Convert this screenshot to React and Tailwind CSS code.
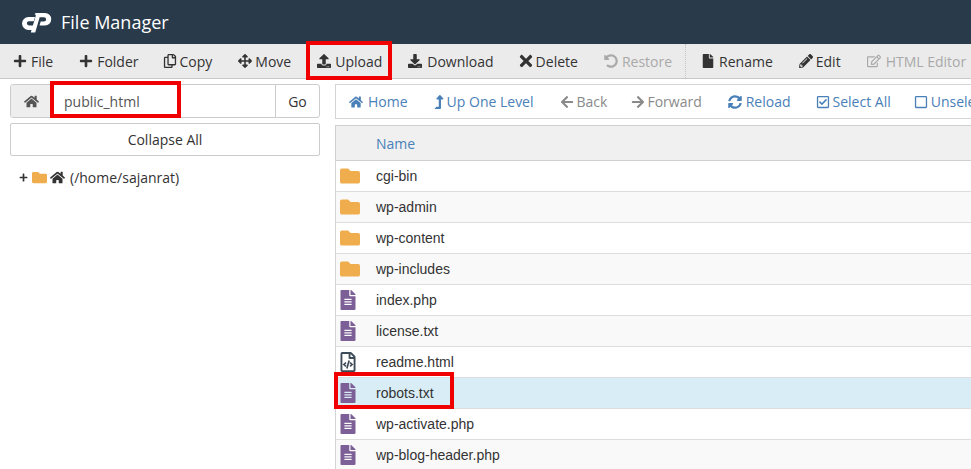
import React from "react";
import { FaPlus, FaRegCopy, FaArrowsAlt, FaUpload, FaDownload, FaTimes, FaUndoAlt, FaFile, FaPencilAlt, FaRegEdit, FaHome, FaLevelUpAlt, FaArrowLeft, FaArrowRight, FaSyncAlt, FaRegCheckSquare, FaRegSquare, FaFolder, FaFileAlt, FaRegFileCode } from "react-icons/fa";

const Tool = ({ icon: I, label, off, box, ic = "text-[14px]" }) => (
  <div className={`flex items-center shrink-0 ${off ? "text-[#a9a9a9]" : "text-[#333]"}`}>
    <div className={`${box} shrink-0 flex items-center`}><I className={`${ic} shrink-0`} /></div>
    <span>{label}</span>
  </div>
);

const Nav = ({ icon: I, label, off, box, cls = "", ic = "text-[14px]" }) => (
  <div className={`flex items-center shrink-0 ${cls} ${off ? "text-[#8a8a8a]" : "text-[#4a80b8]"}`}>
    <div className={`${box} shrink-0 flex items-center`}><I className={`${ic} shrink-0`} /></div>
    <span>{label}</span>
  </div>
);

const files = [
  ["cgi-bin", "d"], ["wp-admin", "d"], ["wp-content", "d"], ["wp-includes", "d"],
  ["index.php", "f"], ["license.txt", "f"], ["readme.html", "c"], ["robots.txt", "f"],
  ["wp-activate.php", "f"], ["wp-blog-header.php", "f"],
];

const Logo = () => (
  <svg width="31" height="21" viewBox="0 0 31 21" fill="#fff">
    <path d="M7.500 5H14l-1.300 4.200H8a2 2 0 0 0 0 4.200h3.300c.8 0 1.100.5.900 1.100L11 18H7.500a6.500 6.500 0 0 1 0-13z" />
    <path d="M14.500 1H24a6 6 0 0 1 0 12.500h-5.500l1.200-4H23a2 2 0 0 0 0-4.200h-4.300L14.200 20.500H9.800L14.700 4c.3-1-.2-1.500-1-1.500z" />
  </svg>
);

export default function App() {
  return (
    <div className="relative w-[971px] h-[469px] overflow-hidden bg-white font-['Open_Sans',sans-serif] text-[14px] text-[#333]">
      <header className="h-[44px] bg-[#293a4a] flex items-center pl-[21px] gap-[9px] text-white">
        <Logo />
        <span className="text-[18px] leading-none">File Manager</span>
      </header>

      <div className="h-[35px] bg-[#ebebeb] border-b border-[#c8c8c8] flex items-center pl-[13px] gap-[26px] whitespace-nowrap overflow-hidden">
        <Tool icon={FaPlus} label="File" box="w-[18px]" />
        <Tool icon={FaPlus} label="Folder" box="w-[18px]" />
        <Tool icon={FaRegCopy} label="Copy" box="w-[15px]" ic="text-[14px] -ml-[2px]" />
        <Tool icon={FaArrowsAlt} label="Move" box="w-[17px]" />
        <Tool icon={FaUpload} label="Upload" box="w-[18px]" />
        <Tool icon={FaDownload} label="Download" box="w-[19px]" />
        <Tool icon={FaTimes} label="Delete" box="w-[16px]" ic="text-[18px] -ml-[3px]" />
        <div className="flex items-center shrink-0 h-full">
          <Tool icon={FaUndoAlt} label="Restore" off box="w-[18px]" />
          <div className="h-full ml-[13px] mr-[17px] border-l border-dotted border-[#c4c4c4]" />
          <Tool icon={FaFile} label="Rename" box="w-[16px]" ic="text-[14px] -ml-[2px]" />
        </div>
        <Tool icon={FaPencilAlt} label="Edit" box="w-[17px]" />
        <Tool icon={FaRegEdit} label="HTML Editor" off box="w-[19px]" />
      </div>

      <div className="flex">
        <aside className="w-[310px] ml-[10px] mt-[5px] shrink-0">
          <div className="h-[34px] flex border border-[#ccc] rounded-[3px] overflow-hidden">
            <div className="w-[40px] bg-[#eeeeee] flex items-center justify-center text-[#555]"><FaHome className="text-[15px]" /></div>
            <div className="flex-1 flex items-center pl-[13px] text-[#555]">public_html</div>
            <div className="w-[44px] border-l border-[#ccc] flex items-center justify-center">Go</div>
          </div>
          <div className="h-[33px] mt-[5px] flex items-center justify-center border border-[#ccc] rounded-[2px]">Collapse All</div>
          <div className="mt-[11px] ml-[9px] flex items-center h-[20px] text-[#333]">
            <FaPlus className="text-[9px] mr-[4px]" />
            <FaFolder className="text-[15px] text-[#f0ad4e] mr-[3px]" />
            <FaHome className="text-[15px] mr-[5px]" />
            <span>(/home/sajanrat)</span>
          </div>
        </aside>

        <main className="ml-[15px] mt-[5px] flex-1 min-w-0">
          <div className="h-[35px] border border-r-0 border-[#d4d4d4] flex items-center pl-[13px] gap-[26px] whitespace-nowrap overflow-hidden">
            <Nav icon={FaHome} label="Home" box="w-[19px]" />
            <Nav icon={FaLevelUpAlt} label="Up One Level" box="w-[13px]" ic="text-[14px] -ml-[2px]" />
            <Nav icon={FaArrowLeft} label="Back" off box="w-[17px]" />
            <Nav icon={FaArrowRight} label="Forward" off box="w-[16px]" cls="-ml-[2px]" />
            <Nav icon={FaSyncAlt} label="Reload" box="w-[18px]" />
            <Nav icon={FaRegCheckSquare} label="Select All" box="w-[16px]" ic="text-[14px] -ml-[1px]" />
            <Nav icon={FaRegSquare} label="Unselect All" box="w-[16px]" cls="-ml-[2px]" ic="text-[14px] -ml-[1px]" />
          </div>
          <div className="mt-[6px] h-[36px] bg-[#f0f0f0] border border-r-0 border-[#d0d0d0] flex items-center pl-[40px] text-[#4a80b8]">Name</div>
          <div className="font-['Liberation_Sans',Arial,sans-serif] border-l border-[#d4d4d4]">
            {files.map(([name, kind], i) => {
              const selected = name === "robots.txt";
              return (
                <div key={name} className={`h-[31px] border-b border-[#dddddd] flex items-center ${selected ? "bg-[#d9edf7]" : i % 2 ? "bg-[#f9f9f9]" : "bg-white"}`}>
                  <div className="w-[40px] pl-[4px] flex items-center shrink-0">
                    {kind === "d" && <FaFolder className="text-[20px] text-[#f0ad4e]" />}
                    {kind === "f" && <FaFileAlt className="-ml-[2px] text-[20px] text-[#7c5f96]" />}
                    {kind === "c" && <FaRegFileCode className="-ml-[2px] text-[20px] text-[#3d4a57]" />}
                  </div>
                  <span>{name}</span>
                </div>
              );
            })}
          </div>
        </main>
      </div>

      <div className="absolute left-[306px] top-[41px] w-[86px] h-[39px] border-[4px] border-[#f00000]" />
      <div className="absolute left-[50px] top-[81px] w-[131px] h-[37px] border-[4px] border-[#f00000]" />
      <div className="absolute left-[334px] top-[372px] w-[120px] h-[37px] border-[4px] border-[#f00000]" />
    </div>
  );
}
